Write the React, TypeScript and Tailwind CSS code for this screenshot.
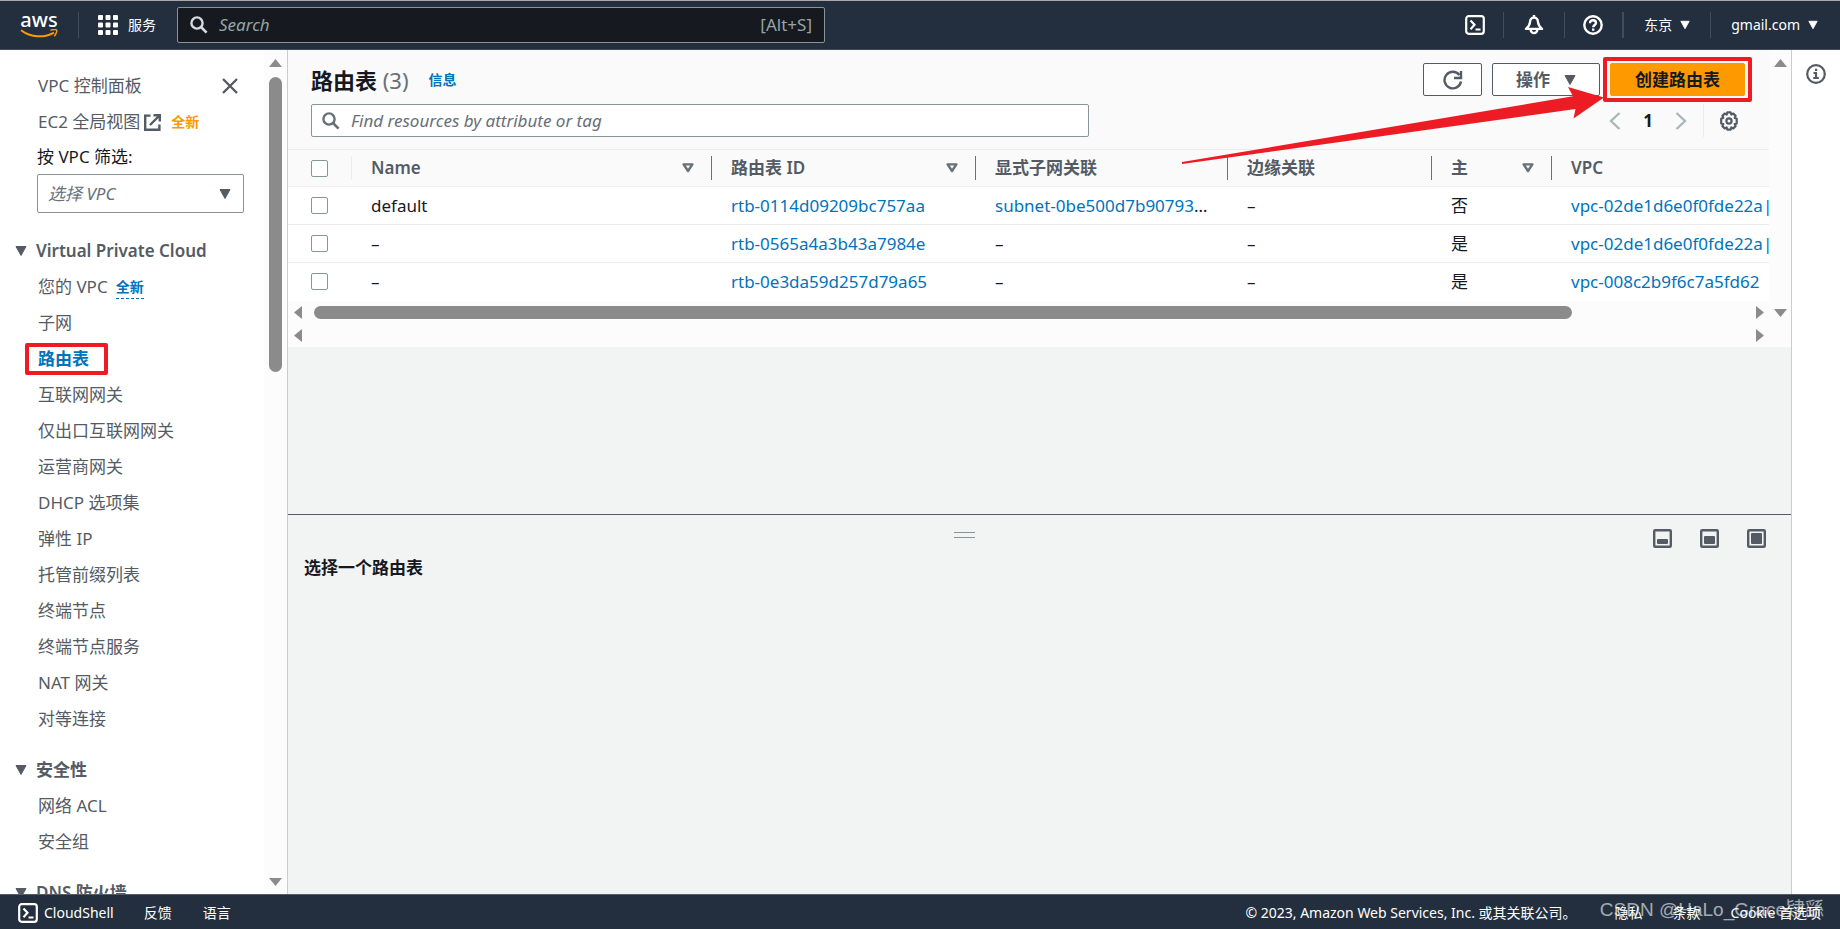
import type { ReactNode } from 'react';

type NavItem = { label: string; active?: boolean; isNew?: boolean };

const vpcItems: NavItem[] = [
  { label: '您的 VPC', isNew: true },
  { label: '子网' },
  { label: '路由表', active: true },
  { label: '互联网网关' },
  { label: '仅出口互联网网关' },
  { label: '运营商网关' },
  { label: 'DHCP 选项集' },
  { label: '弹性 IP' },
  { label: '托管前缀列表' },
  { label: '终端节点' },
  { label: '终端节点服务' },
  { label: 'NAT 网关' },
  { label: '对等连接' },
];

const securityItems: NavItem[] = [{ label: '网络 ACL' }, { label: '安全组' }];

const rows = [
  { name: 'default', id: 'rtb-0114d09209bc757aa', subnet: 'subnet-0be500d7b90793', main: '否', vpc: 'vpc-02de1d6e0f0fde22a', more: true },
  { name: '–', id: 'rtb-0565a4a3b43a7984e', subnet: '', main: '是', vpc: 'vpc-02de1d6e0f0fde22a', more: true },
  { name: '–', id: 'rtb-0e3da59d257d79a65', subnet: '', main: '是', vpc: 'vpc-008c2b9f6c7a5fd62', more: false },
];

const columns = [
  { label: 'Name', sortable: true },
  { label: '路由表 ID', sortable: true },
  { label: '显式子网关联', sortable: false },
  { label: '边缘关联', sortable: false },
  { label: '主', sortable: true },
  { label: 'VPC', sortable: false },
];

function Caret({ className = 'w-3' }: { className?: string }) {
  return (
    <svg viewBox="0 0 12 10" className={`h-[10px] shrink-0 ${className}`} fill="currentColor" aria-hidden="true">
      <path d="M1 .5h10L6 9.5z" stroke="currentColor" strokeLinejoin="round" />
    </svg>
  );
}

function SortIcon() {
  return (
    <svg viewBox="0 0 12 10" className="h-[10px] w-[12px] shrink-0" fill="none" stroke="#687078" strokeWidth="2.4" aria-hidden="true">
      <path d="M1.6 1.4h8.8L6 8z" strokeLinejoin="round" />
    </svg>
  );
}

function SearchIcon({ className = '' }: { className?: string }) {
  return (
    <svg viewBox="0 0 18 18" className={`h-[18px] w-[18px] shrink-0 ${className}`} fill="none" stroke="currentColor" strokeWidth="2.4" aria-hidden="true">
      <circle cx="7" cy="7" r="5.6" />
      <path d="M11 11l5.6 5.6" strokeWidth="2.6" />
    </svg>
  );
}

function ShellIcon() {
  return (
    <svg viewBox="0 0 20 20" className="h-5 w-5" fill="none" stroke="currentColor" strokeWidth="2.2" aria-hidden="true">
      <rect x="1.2" y="1.2" width="17.6" height="17.6" rx="2.5" />
      <path d="M5.5 5.5l4 4.3-4 4.4M10.5 14.500h5" />
    </svg>
  );
}

function ScrollArrow({ dir }: { dir: 'up' | 'down' | 'left' | 'right' }) {
  const paths = {
    up: 'M0 11l6.5-8 6.5 8z',
    down: 'M0 3l6.5 8 6.5-8z',
    left: 'M11 0v13L3 6.5z',
    right: 'M3 0v13l8-6.5z',
  };
  return (
    <svg viewBox="0 0 13 13" className="h-[13px] w-[13px] shrink-0" fill="#8b8b8b" aria-hidden="true">
      <path d={paths[dir]} />
    </svg>
  );
}

function PanelIcon({ top, label }: { top: number; label: string }) {
  return (
    <button type="button" aria-label={label} className="text-[#545b64]">
      <svg viewBox="0 0 19 19" className="h-[19px] w-[19px]" fill="none" aria-hidden="true">
        <rect x="1.2" y="1.2" width="16.6" height="16.6" rx="1" stroke="currentColor" strokeWidth="2.4" />
        <rect x="4" y={top} width="11" height={15 - top} rx="1" fill="currentColor" />
      </svg>
    </button>
  );
}

function TopBar() {
  return (
    <header className="flex h-[50px] shrink-0 items-center border-t border-b border-t-[#a9a9a9] border-b-[#414d5c] bg-[#232f3e] text-sm text-white">
      <a href="#" aria-label="aws" className="ml-[19px] flex w-10 flex-col items-center">
        <span className="text-[20px] leading-[14px] font-medium">aws</span>
        <svg viewBox="0 0 38 9" className="mt-[2px] h-[9px] w-[38px]" fill="none" stroke="#ff9900" strokeWidth="2" aria-hidden="true">
          <path d="M1 1.2C11 8.6 24 9.2 34 3.6" />
          <path d="M30.5 1.3c2.5-.9 5.6-.9 6.1-.1.5.9-.5 4-2.3 6" strokeWidth="1.5" />
        </svg>
      </a>
      <span className="ml-[19px] h-[26px] w-px bg-[#414d5c]" />
      <button type="button" className="ml-[19px] flex items-center gap-2.5">
        <svg viewBox="0 0 20 20" className="h-5 w-5" fill="currentColor" aria-hidden="true">
          {[0, 7.5, 15].map((y) =>
            [0, 7.5, 15].map((x) => <rect key={`${x}-${y}`} x={x} y={y} width="5" height="5" rx="1" />)
          )}
        </svg>
        服务
      </button>
      <div className="ml-[21px] flex h-9 w-[648px] items-center rounded-xs border border-[#879596] bg-[#16191f] px-3 text-[17px]">
        <SearchIcon className="text-[#d5dbdb]" />
        <input
          type="search"
          aria-label="Search"
          placeholder="Search"
          className="ml-[11px] min-w-0 flex-1 bg-transparent outline-none placeholder:text-[#95a5a6] placeholder:italic"
        />
        <span className="text-[#95a5a6]">[Alt+S]</span>
      </div>
      <div className="ml-auto flex items-center">
        <button type="button" aria-label="CloudShell">
          <ShellIcon />
        </button>
        <span className="ml-[18px] h-[26px] w-px bg-[#414d5c]" />
        <button type="button" aria-label="通知" className="ml-5">
          <svg viewBox="0 0 20 20" className="h-5 w-5" fill="none" stroke="currentColor" strokeWidth="2.4" aria-hidden="true">
            <path d="M10 2.6c-2.8 0-3.8 2-4 4.400-.2 3-1.3 4.8-4 6.9h16c-2.7-2.1-3.8-3.9-4-6.9-.2-2.4-1.2-4.4-4-4.4z" strokeLinejoin="round" />
            <path d="M10 0v3" />
            <path d="M6.7 14.8a3.3 3.3 0 0 0 6.6 0" />
          </svg>
        </button>
        <span className="ml-5 h-[26px] w-px bg-[#414d5c]" />
        <button type="button" aria-label="帮助" className="ml-[18px]">
          <svg viewBox="0 0 20 20" className="h-5 w-5" fill="none" stroke="currentColor" strokeWidth="2.4" aria-hidden="true">
            <circle cx="10" cy="10" r="8.7" />
            <path d="M7 8.2c0-1.9 1.3-3 3-3s3 1 3 2.7c0 2.2-2.8 2.1-2.8 4.4M10.2 13.6v2.2" />
          </svg>
        </button>
        <span className="ml-[19px] h-[26px] w-0.5 bg-[#414d5c]" />
        <button type="button" className="ml-5 flex items-center gap-2">
          东京 <Caret className="w-[10px]" />
        </button>
        <span className="ml-5 h-[26px] w-px bg-[#414d5c]" />
        <button type="button" className="mr-[22px] ml-5 flex items-center gap-2">
          gmail.com <Caret className="w-[10px]" />
        </button>
      </div>
    </header>
  );
}

function NavLink({ item }: { item: NavItem }) {
  return (
    <li className="flex h-9 items-center">
      <a href="#" className={item.active ? 'relative font-bold text-[#0073bb]' : ''}>
        {item.label}
        {item.active && <span className="absolute -top-1 -right-[19px] -bottom-1 -left-[13px] rounded-xs border-4 border-[#ed1c24]" />}
      </a>
      {item.isNew && (
        <a href="#" className="ml-2 border-b border-dashed border-[#0073bb] text-sm leading-[22px] font-bold text-[#0073bb]">
          全新
        </a>
      )}
    </li>
  );
}

function NavSection({ title, items }: { title: string; items: NavItem[] }) {
  return (
    <section className="pb-[15px]">
      <h2 className="flex h-9 items-center gap-[9px] pl-[15px] font-semibold">
        <Caret /> {title}
      </h2>
      <ul className="pl-[38px]">
        {items.map((item) => (
          <NavLink key={item.label} item={item} />
        ))}
      </ul>
    </section>
  );
}

function Sidebar() {
  return (
    <aside className="flex w-72 shrink-0 border-r border-[#cccccc] bg-white">
      <nav className="min-w-0 flex-1 overflow-hidden pt-[18px] leading-6 text-[#545b64]">
        <div className="flex h-9 items-center justify-between pr-[26px] pl-[38px]">
          <a href="#">VPC 控制面板</a>
          <button type="button" aria-label="关闭">
            <svg viewBox="0 0 16 16" className="h-4 w-4" stroke="currentColor" strokeWidth="2.4" aria-hidden="true">
              <path d="M1 1l14 14M15 1L1 15" />
            </svg>
          </button>
        </div>
        <div className="flex h-9 items-center pl-[38px]">
          <a href="#" className="flex items-center gap-1">
            EC2 全局视图
            <svg viewBox="0 0 17 17" className="h-[17px] w-[17px]" fill="none" stroke="currentColor" strokeWidth="2.4" aria-hidden="true">
              <path d="M6.5 1.6H1.2v14.2h14.2v-5.3M9.5 1.2h6.3v6.3M15.5 1.5L6 11" />
            </svg>
          </a>
          <span className="ml-2.5 text-sm font-bold text-[#ff9900]">全新</span>
        </div>
        <div className="pr-5 pl-[37px]">
          <label htmlFor="vpc-filter" className="flex h-[34px] items-center text-[#16191f]">
            按 VPC 筛选:
          </label>
          <div className="relative flex items-center">
            <select
              id="vpc-filter"
              className="h-[39px] w-full appearance-none rounded-xs border border-[#879596] bg-white px-[10px] text-[#687078] italic"
            >
              <option>选择 VPC</option>
            </select>
            <Caret className="pointer-events-none absolute right-[13px] w-3" />
          </div>
        </div>
        <div className="pt-5">
          <NavSection title="Virtual Private Cloud" items={vpcItems} />
          <NavSection title="安全性" items={securityItems} />
          <NavSection title="DNS 防火墙" items={[]} />
        </div>
      </nav>
      <div className="flex w-[23px] shrink-0 flex-col items-center bg-[#fcfcfc] py-1.5" aria-hidden="true">
        <ScrollArrow dir="up" />
        <div className="mt-2 flex w-full flex-1 justify-center">
          <span className="h-[37%] w-[13px] rounded-full bg-[#8b8b8b]" />
        </div>
        <ScrollArrow dir="down" />
      </div>
    </aside>
  );
}

function ActionButton({ label, className = '', children }: { label?: string; className?: string; children: ReactNode }) {
  return (
    <button
      type="button"
      aria-label={label}
      className={`flex h-[33px] items-center justify-center rounded-xs border font-bold ${className}`}
    >
      {children}
    </button>
  );
}

function TableHeader() {
  return (
    <div className="pr-6 pb-3 pl-[23px]">
      <div className="flex items-center pt-[13px]">
        <h1 className="text-[22px] leading-8 font-bold text-[#16191f]">
          路由表 <span className="font-normal text-[#687078]">(3)</span>
        </h1>
        <a href="#" className="ml-5 text-sm font-bold text-[#0073bb]">
          信息
        </a>
        <div className="ml-auto flex gap-2.5">
          <ActionButton label="刷新" className="w-[59px] border-[#545b64] bg-white text-[#545b64]">
            <svg viewBox="0 0 20 20" className="h-5 w-5" fill="none" stroke="currentColor" strokeWidth="2.4" aria-hidden="true">
              <path d="M18 11.5A8.3 8.3 0 1 1 16.4 5" />
              <path d="M18 1v7h-7" />
            </svg>
          </ActionButton>
          <ActionButton className="w-[108px] gap-3.5 border-[#545b64] bg-white text-[#545b64]">
            操作 <Caret />
          </ActionButton>
          <div className="relative">
            <ActionButton className="w-[135px] border-[#ff9900] bg-[#ff9900] text-[#16191f]">创建路由表</ActionButton>
            <span className="pointer-events-none absolute -inset-x-[7px] -top-1.5 -bottom-1.5 z-10 rounded-xs border-4 border-[#ed1c24]" />
            <svg
              viewBox="0 0 422 78"
              className="pointer-events-none absolute top-6 right-[141px] z-10 h-[78px] w-[422px] max-w-none"
              fill="#ed1c24"
              aria-hidden="true"
            >
              <path d="M0 75L391 9.3 386 0l36 10.5-30.5 21 2-9.5L0 77z" />
            </svg>
          </div>
        </div>
      </div>
      <div className="mt-2 flex h-[33px] items-center justify-between">
        <div className="flex h-full w-[778px] items-center rounded-xs border border-[#879596] bg-white px-2.5 text-[#687078]">
          <SearchIcon />
          <input
            type="search"
            aria-label="Find resources by attribute or tag"
            placeholder="Find resources by attribute or tag"
            className="ml-[11px] min-w-0 flex-1 bg-transparent outline-none placeholder:text-[#687078] placeholder:italic"
          />
        </div>
        <div className="mr-1.5 flex h-full items-center">
          <button type="button" aria-label="上一页" className="text-[#aab7b8]">
            <svg viewBox="0 0 12 18" className="h-[18px] w-3" fill="none" stroke="currentColor" strokeWidth="2.4" aria-hidden="true">
              <path d="M10.5 1L2 9l8.5 8" />
            </svg>
          </button>
          <span className="w-[54px] text-center font-bold text-[#16191f]">1</span>
          <button type="button" aria-label="下一页" className="text-[#aab7b8]">
            <svg viewBox="0 0 12 18" className="h-[18px] w-3" fill="none" stroke="currentColor" strokeWidth="2.4" aria-hidden="true">
              <path d="M1.5 1l8.5 8-8.5 8" />
            </svg>
          </button>
          <span className="mr-[15px] ml-4 h-full w-px bg-[#eaeded]" />
          <button type="button" aria-label="首选项" className="text-[#545b64]">
            <svg viewBox="0 0 20 20" className="h-5 w-5" fill="none" stroke="currentColor" strokeWidth="2.2" strokeLinejoin="round" aria-hidden="true">
              <path d="M8.4 1.4h3.200l.7 2.100 2-.9 2.300 2.300-.9 2 2 .7v4.800l-2 .7.9 2-2.300 2.300-2-.9-.7 2.100H8.400l-.7-2.100-2 .9-2.300-2.300.9-2-2.100-.7V7.600l2.100-.7-.9-2 2.300-2.300 2 .9z" />
              <circle cx="10" cy="10" r="2.6" />
            </svg>
          </button>
        </div>
      </div>
    </div>
  );
}

function CheckBox({ label }: { label: string }) {
  return (
    <input type="checkbox" aria-label={label} className="block h-[17px] w-[17px] appearance-none rounded-xs border border-[#879596] bg-white" />
  );
}

function RouteTable() {
  return (
    <div className="overflow-hidden">
      <table className="w-full table-fixed border-collapse text-left whitespace-nowrap text-[#16191f]">
        <colgroup>
          <col className="w-16" />
          <col className="w-[360px]" />
          <col className="w-[264px]" />
          <col className="w-[252px]" />
          <col className="w-[204px]" />
          <col className="w-[120px]" />
          <col />
        </colgroup>
        <thead className="border-y border-[#eaeded] text-[#545b64]">
          <tr className="h-[37px]">
            <th className="p-0">
              <div className="flex h-6 items-center border-r border-[#eaeded] pl-[23px]">
                <CheckBox label="全选" />
              </div>
            </th>
            {columns.map((col) => (
              <th key={col.label} className="group p-0 font-semibold">
                <div className="flex h-6 items-center justify-between border-r border-[#687078] pr-[17px] pl-[19px] group-last:border-r-0">
                  {col.label}
                  {col.sortable && <SortIcon />}
                </div>
              </th>
            ))}
          </tr>
        </thead>
        <tbody className="bg-white">
          {rows.map((row) => (
            <tr key={row.id} className="h-[38px] border-b border-[#eaeded] last:border-b-0">
              <td className="p-0 pl-[23px]">
                <CheckBox label={row.id} />
              </td>
              <td className="p-0 pl-[19px]">{row.name}</td>
              <td className="p-0 pl-[19px]">
                <a href="#" className="text-[#0073bb]">{row.id}</a>
              </td>
              <td className="p-0 pl-[19px]">
                {row.subnet ? <><a href="#" className="text-[#0073bb]">{row.subnet}</a>…</> : '–'}
              </td>
              <td className="p-0 pl-[19px]">–</td>
              <td className="p-0 pl-[19px]">{row.main}</td>
              <td className="overflow-hidden p-0 pl-[19px]">
                <a href="#" className="text-[#0073bb]">
                  {row.vpc}
                  {row.more && <span>|</span>}
                </a>
              </td>
            </tr>
          ))}
        </tbody>
      </table>
    </div>
  );
}

function Main() {
  return (
    <main className="flex min-w-0 flex-1 flex-col bg-[#f2f3f3]">
      <div className="h-[55%] shrink-0">
        <div className="flex bg-[#fafafa]">
          <div className="min-w-0 flex-1">
            <TableHeader />
            <RouteTable />
            <div className="bg-[#fcfcfc]" aria-hidden="true">
              <div className="flex h-[23px] items-center px-[3px]">
                <ScrollArrow dir="left" />
                <div className="mx-2.5 flex-1">
                  <span className="block h-[13px] w-[88%] rounded-full bg-[#8b8b8b]" />
                </div>
                <ScrollArrow dir="right" />
              </div>
              <div className="flex h-[23px] items-center justify-between px-[3px]">
                <ScrollArrow dir="left" />
                <ScrollArrow dir="right" />
              </div>
            </div>
          </div>
          <div className="flex w-[22px] shrink-0 flex-col items-center justify-between bg-[#fcfcfc] pt-1.5 pb-7" aria-hidden="true">
            <ScrollArrow dir="up" />
            <ScrollArrow dir="down" />
          </div>
        </div>
      </div>
      <section className="flex-1 border-t border-[#545b64] px-4">
        <div className="relative flex h-[33px] items-end justify-end gap-7 pr-[9px]">
          <span className="absolute top-[17px] left-[44.2%] h-[6px] w-[21px] border-y border-[#879596]" />
          <PanelIcon top={10} label="小" />
          <PanelIcon top={7} label="中" />
          <PanelIcon top={4} label="大" />
        </div>
        <h2 className="mt-2 leading-6 font-bold text-[#16191f]">选择一个路由表</h2>
      </section>
    </main>
  );
}

function Footer() {
  return (
    <footer className="relative flex h-[35px] shrink-0 items-center border-t border-[#545b64] bg-[#232f3e] pt-px pr-[19px] pl-[18px] text-sm text-white">
      <button type="button" className="flex items-center gap-1.5">
        <ShellIcon /> CloudShell
      </button>
      <a href="#" className="ml-[30px]">反馈</a>
      <a href="#" className="ml-[31px]">语言</a>
      <span className="ml-auto">© 2023, Amazon Web Services, Inc. 或其关联公司。</span>
      <a href="#" className="ml-[38px]">隐私</a>
      <a href="#" className="ml-[30px]">条款</a>
      <a href="#" className="ml-[30px]">Cookie 首选项</a>
      <span className="pointer-events-none absolute top-[3px] right-4 font-['Liberation_Sans','Noto_Sans_CJK_SC',sans-serif] text-[19px] leading-6 text-white/60">
        CSDN @HaLo_Grace肄繇
      </span>
    </footer>
  );
}

export default function App() {
  return (
    <div className="flex h-screen flex-col overflow-hidden font-['Noto_Sans','Noto_Sans_CJK_SC',sans-serif] text-[17px]">
      <TopBar />
      <div className="flex min-h-0 flex-1">
        <Sidebar />
        <Main />
        <aside className="flex w-[49px] shrink-0 justify-center border-l border-[#cccccc] bg-white pt-3.5">
          <button type="button" aria-label="信息" className="h-5 text-[#545b64]">
            <svg viewBox="0 0 20 20" className="h-5 w-5" fill="none" stroke="currentColor" strokeWidth="2.2" aria-hidden="true">
              <circle cx="10" cy="10" r="8.8" />
              <path d="M7.5 9H10v5M7.3 14h5.5M9 5.8h2.2" />
            </svg>
          </button>
        </aside>
      </div>
      <Footer />
    </div>
  );
}
